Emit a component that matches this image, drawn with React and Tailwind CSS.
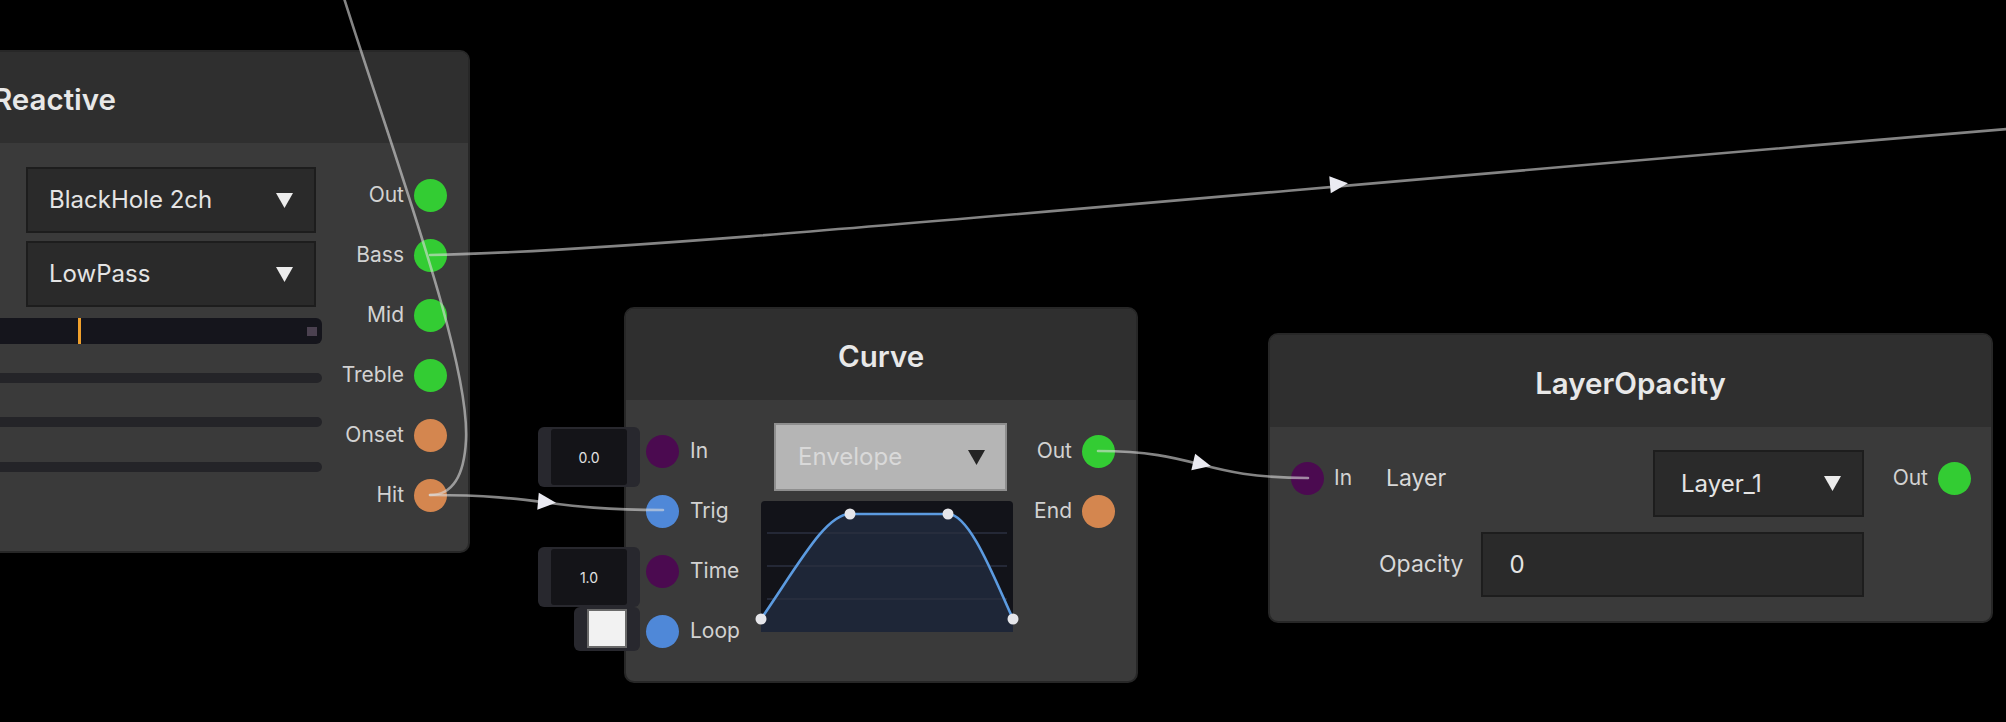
import React from 'react';

// Node graph canvas: Reactive -> Curve -> LayerOpacity

const GREEN = 'bg-[#33cc33]';
const ORANGE = 'bg-[#d4864f]';
const PURPLE = 'bg-[#4b0a50]';
const BLUE = 'bg-[#4f88d8]';

function Caret({ className = '' }) {
  return (
    <svg width="17" height="15" viewBox="0 0 17 15" className={className}>
      <polygon points="0,0 17,0 8.5,15" fill="currentColor" />
    </svg>
  );
}

function Dot({ color }) {
  return <div className={`w-[33px] h-[33px] rounded-full shrink-0 ${color}`} />;
}

function OutPort({ label, color }) {
  return (
    <div className="h-[60px] flex items-center justify-end gap-[10px]">
      <span className="text-[21px] text-[#d2d2d2]">{label}</span>
      <Dot color={color} />
    </div>
  );
}

function InPort({ label, color }) {
  return (
    <div className="h-[60px] flex items-center gap-[11px]">
      <Dot color={color} />
      <span className="text-[21px] text-[#d2d2d2]">{label}</span>
    </div>
  );
}

function Select({ value, className = '' }) {
  return (
    <div className={`flex items-center justify-between bg-[#2a2a2a] border-2 border-[#1d1d1d] pl-[21px] pr-[21px] ${className}`}>
      <span className="text-[24px] text-[#e4e4e4]">{value}</span>
      <Caret className="text-[#ececec]" />
    </div>
  );
}

function Header({ title, className = 'h-[91px]' }) {
  return (
    <div className={`${className} bg-[#2f2f2f] rounded-t-[8px] flex items-center justify-center pt-[4px]`}>
      <span className="text-[29.5px] font-semibold text-[#e8e8e8]">{title}</span>
    </div>
  );
}

function NumBox({ value, className = '' }) {
  return (
    <div className={`absolute w-[102px] h-[60px] rounded-[6px] bg-[#28282e] px-[13px] py-[2px] ${className}`}>
      <div className="w-full h-full rounded-[3px] bg-[#141418] flex items-center justify-center text-[14px] text-[#e2e2e2]">
        {value}
      </div>
    </div>
  );
}

function Wires() {
  const stroke = 'rgba(220,220,220,0.6)';
  return (
    <svg className="absolute inset-0 z-10 pointer-events-none" width="2006" height="722" viewBox="0 0 2006 722">
      <g fill="none" stroke={stroke} strokeWidth="2.6" strokeLinecap="round">
        <path d="M 343 -5 C 395 160, 470 360, 466 440 C 464 480, 450 495, 430 495" />
        <path d="M 430 255 C 650 251, 1100 205, 2020 128" />
        <path d="M 430 495 C 546 495, 546 510, 663 510" />
        <path d="M 1098 451 C 1200 451, 1200 478, 1308 478" />
      </g>
      <g fill="#ebebf2">
        <polygon points="-9,-8.5 9,0 -9,8.5" transform="translate(1339 184) rotate(-5)" />
        <polygon points="-9,-8.5 9,0 -9,8.5" transform="translate(1202 464) rotate(13)" />
        <polygon points="-9,-8.5 9,0 -9,8.5" transform="translate(547 502) rotate(5)" />
      </g>
    </svg>
  );
}

function ReactiveNode() {
  return (
    <div className="absolute left-[-361px] top-[50px] w-[831px] h-[503px] rounded-[10px] border-2 border-[#272727] bg-[#3a3a3a]">
      <Header title="Reactive" />
      <div className="flex">
        <div className="w-[681px] pl-[40px] pt-[24px] flex flex-col">
          <Select value="BlackHole 2ch" className="self-end mr-[6px] w-[290px] h-[66px]" />
          <Select value="LowPass" className="self-end mr-[6px] mt-[8px] w-[290px] h-[66px]" />
          <div className="relative mt-[11px] h-[26px] rounded-[6px] bg-[#15151c]">
            <div className="absolute left-[397px] top-0 w-[3px] h-full bg-[#f0a02c]" />
            <div className="absolute right-[5px] top-[9px] w-[10px] h-[9px] bg-[#4b4150]" />
          </div>
          <div className="mt-[29px] h-[10px] rounded-full bg-[#242428]" />
          <div className="mt-[34px] h-[10px] rounded-full bg-[#242428]" />
          <div className="mt-[35px] h-[10px] rounded-full bg-[#242428]" />
        </div>
        <div className="flex-1 pt-[22px] pr-[21px] flex flex-col items-end">
          <OutPort label="Out" color={GREEN} />
          <OutPort label="Bass" color={GREEN} />
          <OutPort label="Mid" color={GREEN} />
          <OutPort label="Treble" color={GREEN} />
          <OutPort label="Onset" color={ORANGE} />
          <OutPort label="Hit" color={ORANGE} />
        </div>
      </div>
    </div>
  );
}

function EnvelopeGraph() {
  const curve = 'M 0 118 C 39 61, 65 13, 89 13 L 187 13 C 209 13, 234 79, 252 118';
  return (
    <div className="mt-[10px] w-[252px] h-[131px] rounded-[4px] bg-[#121319]">
      <svg width="252" height="131" viewBox="0 0 252 131" className="overflow-visible">
        <path d={`${curve} L 252 131 L 0 131 Z`} fill="#1e2637" />
        <g stroke="#2b3140" strokeWidth="1.5">
          <line x1="6" y1="32" x2="246" y2="32" />
          <line x1="6" y1="65" x2="246" y2="65" />
          <line x1="6" y1="98" x2="246" y2="98" />
        </g>
        <path d={curve} fill="none" stroke="#5c9be0" strokeWidth="2.6" />
        <g fill="#e6e6ea">
          <circle cx="0" cy="118" r="5.5" />
          <circle cx="89" cy="13" r="5.5" />
          <circle cx="187" cy="13" r="5.5" />
          <circle cx="252" cy="118" r="5.5" />
        </g>
      </svg>
    </div>
  );
}

function CurveNode() {
  return (
    <div className="absolute left-[624px] top-[307px] w-[514px] h-[376px] rounded-[10px] border-2 border-[#272727] bg-[#3a3a3a]">
      <Header title="Curve" />
      <div className="flex pl-[20px] pr-[21px]">
        <div className="w-[115px] pt-[21px] flex flex-col">
          <InPort label="In" color={PURPLE} />
          <InPort label="Trig" color={BLUE} />
          <InPort label="Time" color={PURPLE} />
          <InPort label="Loop" color={BLUE} />
        </div>
        <div className="w-[252px] pt-[23px] flex flex-col">
          <div className="ml-[13px] w-[233px] h-[68px] bg-[#b5b5b5] border-2 border-[#8e8e8e] flex items-center justify-between pl-[22px] pr-[20px]">
            <span className="text-[24px] text-[#d9d9d9]">Envelope</span>
            <Caret className="text-[#242424]" />
          </div>
          <EnvelopeGraph />
        </div>
        <div className="flex-1 pt-[21px] flex flex-col items-end">
          <OutPort label="Out" color={GREEN} />
          <OutPort label="End" color={ORANGE} />
        </div>
      </div>
      <NumBox value="0.0" className="left-[-88px] top-[118px]" />
      <NumBox value="1.0" className="left-[-88px] top-[238px]" />
      <div className="absolute left-[-52px] top-[298px] w-[66px] h-[44px] rounded-[6px] bg-[#28282e] flex items-start pl-[13px] pt-[2px]">
        <div className="w-[40px] h-[39px] bg-[#f2f2f2] border-2 border-[#6a6a6a]" />
      </div>
    </div>
  );
}

function LayerOpacityNode() {
  return (
    <div className="absolute left-[1268px] top-[333px] w-[725px] h-[290px] rounded-[10px] border-2 border-[#272727] bg-[#3a3a3a]">
      <Header title="LayerOpacity" className="h-[92px]" />
      <div className="flex pl-[21px] pr-[20px]">
        <div className="w-[88px] pt-[21px]">
          <div className="h-[60px] flex items-center gap-[10px]">
            <Dot color={PURPLE} />
            <span className="text-[21px] text-[#d2d2d2]">In</span>
          </div>
        </div>
        <div className="w-[485px] pt-[23px] flex flex-col">
          <div className="flex items-center justify-between">
            <span className="pl-[7px] pb-[11px] text-[23px] text-[#d8d8d8]">Layer</span>
            <Select value="Layer_1" className="w-[211px] h-[67px] pl-[26px] pr-[20px]" />
          </div>
          <div className="mt-[15px] flex items-center justify-end gap-[18px]">
            <span className="text-[23px] text-[#d8d8d8]">Opacity</span>
            <div className="w-[387px] h-[65px] bg-[#2a2a2a] border-2 border-[#1d1d1d] flex items-center pl-[26px]">
              <span className="text-[24px] text-[#e4e4e4]">0</span>
            </div>
          </div>
        </div>
        <div className="flex-1 pt-[21px] flex flex-col items-end">
          <OutPort label="Out" color={GREEN} />
        </div>
      </div>
    </div>
  );
}

export default function App() {
  return (
    <div className="relative w-[2006px] h-[722px] bg-black overflow-hidden font-['Inter','Noto_Sans',sans-serif]">
      <ReactiveNode />
      <CurveNode />
      <LayerOpacityNode />
      <Wires />
    </div>
  );
}
